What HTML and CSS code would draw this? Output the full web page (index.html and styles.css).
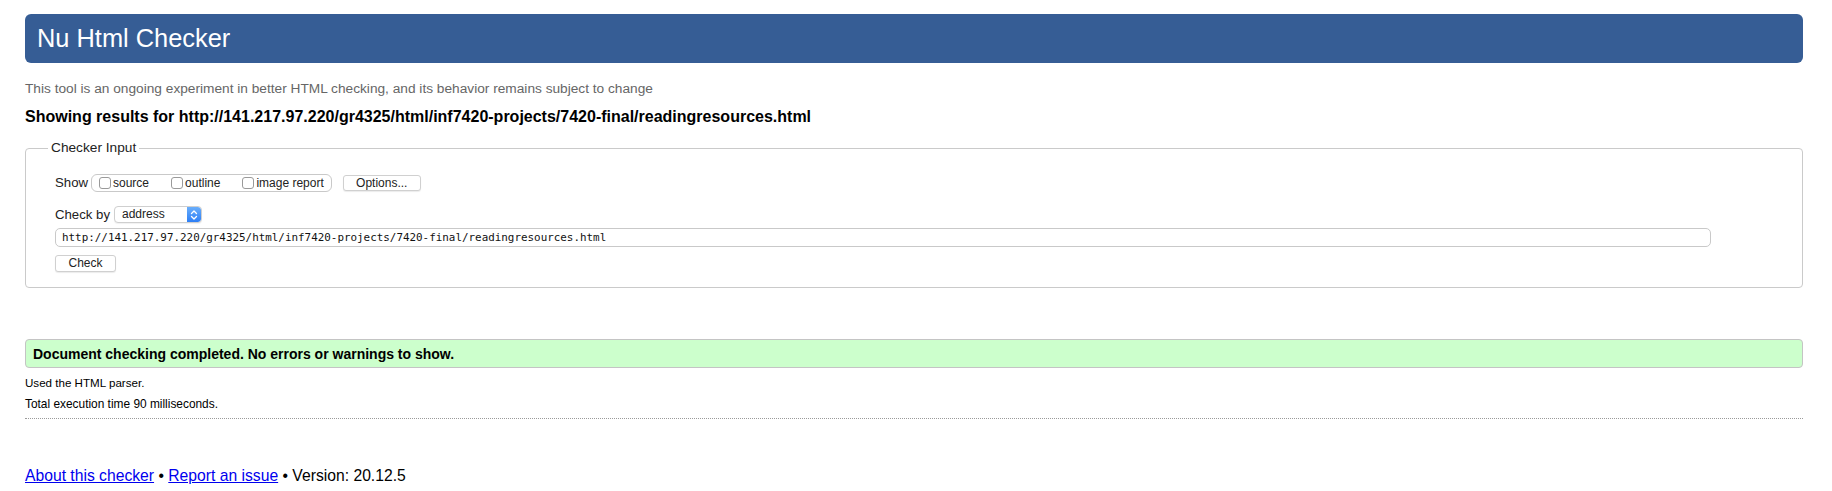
FILE: index.html
```html
<!DOCTYPE html>
<html lang="en">
<head>
<meta charset="utf-8">
<title>Nu Html Checker</title>
<link rel="stylesheet" href="styles.css">
</head>
<body>
<h1 class="masthead">Nu Html Checker</h1>
<p class="intro">This tool is an ongoing experiment in better HTML checking, and its behavior remains subject to change</p>
<p class="results-for">Showing results for http://141.217.97.220/gr4325/html/inf7420-projects/7420-final/readingresources.html</p>
<form class="checker-form">
  <fieldset class="checker-input">
    <legend class="checker-legend">Checker Input</legend>
    <div class="row show-row">
      <span class="row-label">Show</span>
      <div class="opt-group">
        <label class="opt"><input type="checkbox" class="box"><span>source</span></label>
        <label class="opt"><input type="checkbox" class="box"><span>outline</span></label>
        <label class="opt"><input type="checkbox" class="box"><span>image report</span></label>
      </div>
      <button type="button" class="btn options-btn">Options...</button>
    </div>
    <div class="row checkby-row">
      <span class="row-label">Check by</span>
      <div class="select">
        <span class="select-value">address</span>
        <span class="select-stepper">
          <svg width="8" height="12" viewBox="0 0 8 12" aria-hidden="true"><path d="M1.5 4.5 L4 2 L6.5 4.5 M1.5 7.5 L4 10 L6.5 7.5" fill="none" stroke="#fff" stroke-width="1.3" stroke-linecap="round" stroke-linejoin="round"/></svg>
        </span>
      </div>
    </div>
    <div class="url-input">http://141.217.97.220/gr4325/html/inf7420-projects/7420-final/readingresources.html</div>
    <button type="button" class="btn check-btn">Check</button>
  </fieldset>
</form>
<div class="success">Document checking completed. No errors or warnings to show.</div>
<p class="details">Used the HTML parser.</p>
<p class="details details-time">Total execution time 90 milliseconds.</p>
<hr class="dotted">
<p class="footer"><a href="#">About this checker</a> • <a href="#">Report an issue</a> • Version: 20.12.5</p>
</body>
</html>
```
FILE: styles.css
```css
html, body {
  background: #fff;
}
body {
  margin: 0;
  padding: 14px 29px 0 25px;
  font-family: "Liberation Sans", Arial, sans-serif;
  color: #000;
}
.masthead {
  margin: 0;
  height: 49px;
  display: flex;
  align-items: center;
  padding-left: 12px;
  background: #365d95;
  color: #fff;
  border-radius: 6px;
  font-size: 25.4px;
  font-weight: normal;
}
.intro {
  margin: 18px 0 0;
  font-size: 13.7px;
  line-height: 16px;
  color: #666;
}
.results-for {
  margin: 10px 0 0;
  font-size: 16px;
  line-height: 20px;
  font-weight: bold;
}
.checker-form {
  margin: 13px 0 0;
}
.checker-input {
  margin: 0;
  padding: 18px 30px 15px 29px;
  border: 1px solid #cacaca;
  border-radius: 4px;
  min-width: 0;
}
.checker-legend {
  margin-left: -7px;
  padding: 0 3px;
  font-size: 13.7px;
  line-height: 16px;
  color: #222;
}
.row {
  display: flex;
  align-items: center;
}
.row-label {
  font-size: 13.2px;
  line-height: 16px;
  color: #222;
}
.show-row {
  height: 18px;
}
.opt-group {
  margin-left: 3px;
  height: 18px;
  box-sizing: border-box;
  display: flex;
  align-items: center;
  gap: 22px;
  padding: 0 7px 0 7px;
  border: 1px solid #c9c9c9;
  border-radius: 6px;
}
.opt {
  display: flex;
  align-items: center;
  gap: 2px;
  font-size: 12px;
  color: #222;
}
.box {
  appearance: none;
  -webkit-appearance: none;
  margin: 0;
  width: 12px;
  height: 12px;
  box-sizing: border-box;
  border: 1px solid #9a9a9a;
  border-radius: 3px;
  background: #fff;
}
.btn {
  font-family: "Liberation Sans", Arial, sans-serif;
  font-size: 12px;
  color: #222;
  background: #fff;
  border: 1px solid #d0d0d0;
  border-radius: 3px;
  box-shadow: 0 1px 1px rgba(0, 0, 0, 0.08);
  padding: 0;
  box-sizing: border-box;
}
.options-btn {
  margin-left: 11px;
  width: 78px;
  height: 16px;
  line-height: 14px;
}
.checkby-row {
  margin-top: 14px;
  height: 17px;
}
.select {
  margin-left: 4px;
  width: 88px;
  height: 17px;
  box-sizing: border-box;
  display: flex;
  align-items: stretch;
  border: 1px solid #cfcfcf;
  border-radius: 4px;
  background: #fff;
  box-shadow: 0 1px 1px rgba(0, 0, 0, 0.06);
  overflow: hidden;
}
.select-value {
  flex: 1;
  padding-left: 7px;
  font-size: 12px;
  line-height: 15px;
  color: #222;
}
.select-stepper {
  width: 14px;
  display: flex;
  align-items: center;
  justify-content: center;
  background: linear-gradient(#6aaefb, #2d7ff6);
  border-radius: 0 3px 3px 0;
}
.url-input {
  margin-top: 5px;
  height: 19px;
  box-sizing: border-box;
  border: 1px solid #c9c9c9;
  border-radius: 5px;
  padding-left: 6px;
  font-family: "DejaVu Sans Mono", "Liberation Mono", monospace;
  font-size: 10.9px;
  line-height: 17px;
  color: #111;
  white-space: nowrap;
  overflow: hidden;
  width: 1656px;
}
.check-btn {
  display: block;
  margin-top: 8px;
  width: 61px;
  height: 17px;
  line-height: 15px;
}
.success {
  margin-top: 51px;
  height: 29px;
  box-sizing: border-box;
  padding-left: 7px;
  display: flex;
  align-items: center;
  background: #ccffcc;
  border: 1px solid #c4c4c4;
  border-radius: 4px;
  font-size: 14px;
  font-weight: bold;
}
.details {
  margin: 7px 0 0;
  font-size: 11.6px;
  line-height: 14px;
}
.details-time {
  font-size: 11.9px;
}
.success + .details {
  margin-top: 8px;
}
.dotted {
  margin: 7px 0 0;
  height: 0;
  border: 0;
  border-top: 1px dotted #9a9a9a;
}
.footer {
  margin: 48px 0 0;
  font-size: 15.7px;
  line-height: 18px;
}
.footer a {
  color: #0000ee;
}
```
